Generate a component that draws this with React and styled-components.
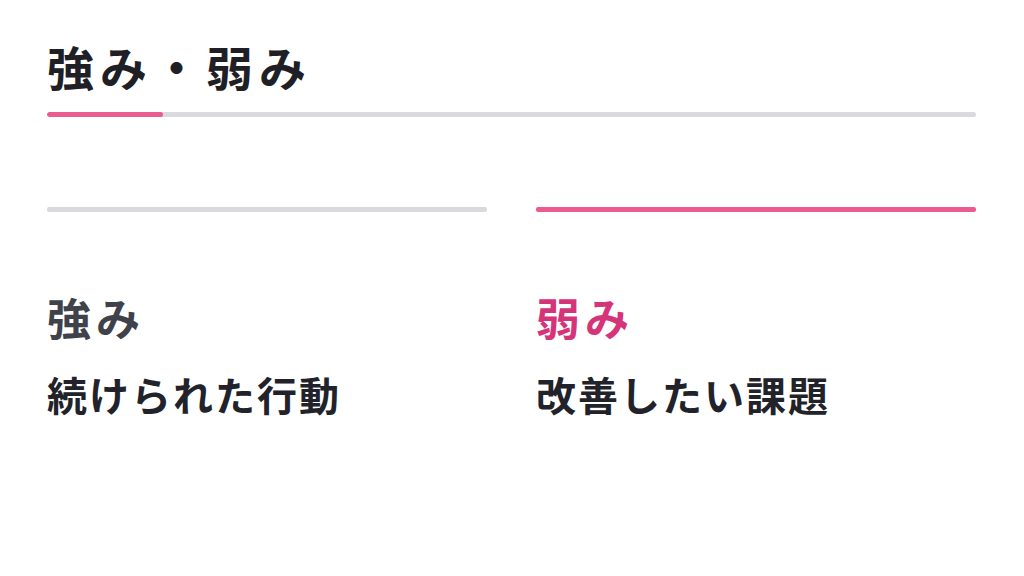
import React from 'react';
import styled, { createGlobalStyle } from 'styled-components';

const GlobalStyle = createGlobalStyle`
  html, body {
    margin: 0;
    padding: 0;
    background: #ffffff;
  }
  body {
    font-family: "Noto Sans CJK JP", "Noto Sans", sans-serif;
  }
`;

const columns = [
  { id: 'strength', title: '強み', text: '続けられた行動', active: false },
  { id: 'weakness', title: '弱み', text: '改善したい課題', active: true }
];

class App extends React.Component {
  render() {
    return (
      <Page>
        <GlobalStyle />
        <Title>強み・弱み</Title>
        <Progress>
          <ProgressFill style={{ width: `${(1 / 8) * 100}%` }} />
        </Progress>
        <Columns>
          {columns.map(col => (
            <Column key={col.id}>
              <ColumnBar active={col.active} />
              <ColumnTitle active={col.active}>{col.title}</ColumnTitle>
              <ColumnText>{col.text}</ColumnText>
            </Column>
          ))}
        </Columns>
      </Page>
    );
  }
}

const Page = styled.div`
  padding: 34px 48px 0 47px;
  box-sizing: border-box;
  width: 1024px;
  height: 576px;
`;

const Title = styled.h1`
  margin: 0;
  font-size: 47px;
  font-weight: 700;
  line-height: 64px;
  letter-spacing: 6px;
  color: #1f2026;
`;

const Progress = styled.div`
  margin-top: 14px;
  height: 5px;
  border-radius: 3px;
  background: #d9d9de;
  overflow: hidden;
`;

const ProgressFill = styled.div`
  height: 100%;
  border-radius: 3px;
  background: #ec5a92;
`;

const Columns = styled.div`
  display: grid;
  grid-template-columns: 1fr 1fr;
  column-gap: 49px;
  margin-top: 90px;
`;

const Column = styled.div`
  display: flex;
  flex-direction: column;
`;

const ColumnBar = styled.div`
  height: 5px;
  border-radius: 2px;
  background: ${props => props.active ? '#ec5a92' : '#d9d9de'};
`;

const ColumnTitle = styled.div`
  margin-top: 75px;
  font-size: 44px;
  font-weight: 700;
  line-height: 60px;
  letter-spacing: 5px;
  color: ${props => props.active ? '#d63478' : '#3f424a'};
`;

const ColumnText = styled.div`
  margin-top: 20px;
  font-size: 40px;
  font-weight: 700;
  line-height: 54px;
  letter-spacing: 2px;
  color: #22232a;
`;

export default App;
